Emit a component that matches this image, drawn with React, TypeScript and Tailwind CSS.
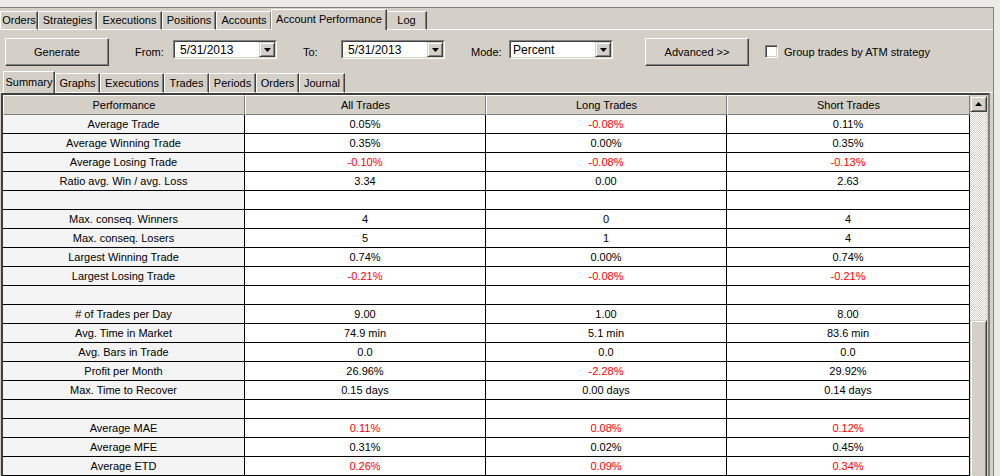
import React from "react";

const mainTabs = [
	{ label: "Orders", w: "w-[38px]" },
	{ label: "Strategies", w: "w-[59px]" },
	{ label: "Executions", w: "w-[65px]" },
	{ label: "Positions", w: "w-[54px]" },
	{ label: "Accounts", w: "w-[56px]" },
	{ label: "Account Performance", w: "w-[116px]", active: true },
	{ label: "Log", w: "w-[41px]" },
];

const subTabs = [
	{ label: "Summary", w: "w-[52px]", active: true },
	{ label: "Graphs", w: "w-[45px]" },
	{ label: "Executions", w: "w-[64px]" },
	{ label: "Trades", w: "w-[45px]" },
	{ label: "Periods", w: "w-[47px]" },
	{ label: "Orders", w: "w-[43px]" },
	{ label: "Journal", w: "w-[46px]" },
];

type Row = { name?: string; vals?: string[]; red?: boolean };

const rows: Row[] = [
	{ name: "Average Trade", vals: ["0.05%", "-0.08%", "0.11%"] },
	{ name: "Average Winning Trade", vals: ["0.35%", "0.00%", "0.35%"] },
	{ name: "Average Losing Trade", vals: ["-0.10%", "-0.08%", "-0.13%"] },
	{ name: "Ratio avg. Win / avg. Loss", vals: ["3.34", "0.00", "2.63"] },
	{},
	{ name: "Max. conseq. Winners", vals: ["4", "0", "4"] },
	{ name: "Max. conseq. Losers", vals: ["5", "1", "4"] },
	{ name: "Largest Winning Trade", vals: ["0.74%", "0.00%", "0.74%"] },
	{ name: "Largest Losing Trade", vals: ["-0.21%", "-0.08%", "-0.21%"] },
	{},
	{ name: "# of Trades per Day", vals: ["9.00", "1.00", "8.00"] },
	{ name: "Avg. Time in Market", vals: ["74.9 min", "5.1 min", "83.6 min"] },
	{ name: "Avg. Bars in Trade", vals: ["0.0", "0.0", "0.0"] },
	{ name: "Profit per Month", vals: ["26.96%", "-2.28%", "29.92%"] },
	{ name: "Max. Time to Recover", vals: ["0.15 days", "0.00 days", "0.14 days"] },
	{},
	{ name: "Average MAE", vals: ["0.11%", "0.08%", "0.12%"], red: true },
	{ name: "Average MFE", vals: ["0.31%", "0.02%", "0.45%"] },
	{ name: "Average ETD", vals: ["0.26%", "0.09%", "0.34%"], red: true },
];

const colW = ["w-[242px]", "w-[241px]", "w-[241px]", "w-[243px]"];

function DownArrow() {
	return (
		<svg width="7" height="4" viewBox="0 0 7 4">
			<path d="M0 0h7L3.5 4z" fill="#000" />
		</svg>
	);
}

function Combo({ value, pad }: { value: string; pad: string }) {
	return (
		<div className="w-[104px] h-[19px] border border-t-[#808080] border-l-[#808080] border-r-white border-b-white">
			<div className="h-full flex items-center bg-white border border-t-[#404040] border-l-[#404040] border-r-[#d4d0c8] border-b-[#d4d0c8]">
				<span className={`flex-1 ${pad} text-[12px] leading-none`}>{value}</span>
				<div className="w-[16px] h-full flex items-center justify-center bg-[#d4d0c8] border border-t-[#d4d0c8] border-l-[#d4d0c8] border-r-[#404040] border-b-[#404040] shadow-[inset_1px_1px_#fff,inset_-1px_-1px_#808080]">
					<DownArrow />
				</div>
			</div>
		</div>
	);
}

function Button({ label }: { label: string }) {
	return (
		<div className="w-[104px] h-[28px] flex items-center justify-center bg-[#d4d0c8] border border-t-white border-l-white border-r-[#404040] border-b-[#404040] shadow-[inset_-1px_-1px_#808080] text-[11px]">
			{label}
		</div>
	);
}

export default function App() {
	return (
		<div className="w-[1000px] h-[476px] overflow-hidden bg-[#ecebe7] text-black font-['Liberation_Sans',Arial,sans-serif] select-none">
			<div className="h-[7px]" />
			<div className="w-[994px] bg-[#d4d0c8] border-t border-r border-[#808080] h-[600px]">
				{/* main tabs */}
				<div className="h-[22px] flex items-end">
					{mainTabs.map((t) =>
						t.active ? (
							<div
								key={t.label}
								className={`${t.w} h-[21px] -mx-[1px] px-[1px] z-10 flex items-start justify-center pt-[4px] whitespace-nowrap bg-[#d4d0c8] border-t border-l border-white border-r border-r-[#404040] shadow-[inset_-1px_0_#808080] text-[11px] leading-none`}
							>
								{t.label}
							</div>
						) : (
							<div
								key={t.label}
								className={`${t.w} h-[19px] flex items-center justify-center pb-[1px] whitespace-nowrap border-t border-l border-b border-white border-r border-r-[#404040] shadow-[inset_-1px_0_#808080] text-[11px] leading-none`}
							>
								{t.label}
							</div>
						)
					)}
					<div className="flex-1 border-b border-white" />
				</div>

				{/* controls */}
				<div className="h-[28px] mt-[8px] flex items-start">
					<div className="ml-[5px]">
						<Button label="Generate" />
					</div>
					<div className="ml-[26px] w-[38px] h-[28px] flex items-center text-[11px]">From:</div>
					<div className="mt-[2px]">
						<Combo value="5/31/2013" pad="pl-[5px]" />
					</div>
					<div className="ml-[26px] w-[38px] h-[28px] flex items-center text-[11px]">To:</div>
					<div className="mt-[2px]">
						<Combo value="5/31/2013" pad="pl-[5px]" />
					</div>
					<div className="ml-[26px] w-[38px] h-[28px] flex items-center text-[11px]">Mode:</div>
					<div className="mt-[2px]">
						<Combo value="Percent" pad="pl-[2px]" />
					</div>
					<div className="ml-[32px]">
						<Button label="Advanced >>" />
					</div>
					<div className="ml-[16px] mt-[7px] w-[13px] h-[13px] bg-white border border-t-[#808080] border-l-[#808080] border-r-white border-b-white shadow-[inset_1px_1px_#404040,inset_-1px_-1px_#d4d0c8]" />
					<div className="ml-[6px] h-[28px] flex items-center text-[11px]">Group trades by ATM strategy</div>
				</div>

				{/* sub tabs */}
				<div className="h-[22px] mt-[5px] flex items-end">
					<div className="w-[3px] h-[1px] bg-white" />
					{subTabs.map((t) =>
						t.active ? (
							<div
								key={t.label}
								className={`${t.w} h-[22px] z-10 flex items-start justify-center pt-[5px] whitespace-nowrap bg-[#d4d0c8] border-t border-l border-white border-r border-r-[#404040] shadow-[inset_-1px_0_#808080] text-[11px] leading-none`}
							>
								{t.label}
							</div>
						) : (
							<div
								key={t.label}
								className={`${t.w} h-[20px] flex items-center justify-center pt-[1px] whitespace-nowrap border-t border-l border-b border-white border-r border-r-[#404040] shadow-[inset_-1px_0_#808080] text-[11px] leading-none`}
							>
								{t.label}
							</div>
						)
					)}
					<div className="flex-1 h-[1px] bg-white" />
				</div>

				{/* grid */}
				<div className="ml-[1px] w-[989px] border-t-2 border-l-2 border-r-2 border-t-[#404040] border-l-[#404040] border-r-[#808080] flex">
					<div>
						<div className="flex">
							{["Performance", "All Trades", "Long Trades", "Short Trades"].map((h, i) => (
								<div
									key={h}
									className={`${colW[i]} h-[20px] flex items-center justify-center bg-[#d4d0c8] border-t border-l border-white border-r border-b border-r-[#808080] border-b-[#808080] text-[11px] leading-none`}
								>
									{h}
								</div>
							))}
						</div>
						{rows.map((r, ri) => (
							<div key={ri} className="flex">
								<div className={`${colW[0]} h-[19px] flex items-center justify-center bg-[#f4f4f4] border-r border-b border-black text-[11px] leading-none`}>
									{r.name}
								</div>
								{[0, 1, 2].map((ci) => {
									const v = r.vals ? r.vals[ci] : "";
									const red = r.red || v.startsWith("-");
									return (
										<div
											key={ci}
											className={`${colW[ci + 1]} h-[19px] flex items-center justify-center bg-white border-r border-b border-black text-[11px] leading-none ${red ? "text-[#ff0000]" : ""}`}
										>
											{v}
										</div>
									);
								})}
							</div>
						))}
					</div>

					{/* scrollbar */}
					<div className="w-[17px] flex flex-col">
						<div className="h-[16px] mt-[1px] flex items-center justify-center bg-[#d4d0c8] border border-t-[#d4d0c8] border-l-[#d4d0c8] border-r-[#404040] border-b-[#404040] shadow-[inset_1px_1px_#fff,inset_-1px_-1px_#808080]">
							<svg width="7" height="4" viewBox="0 0 7 4">
								<path d="M3.5 0L7 4H0z" fill="#000" />
							</svg>
						</div>
						<div className="h-[208px] bg-[repeating-conic-gradient(#d4d0c8_0_25%,#ffffff_0_50%)] bg-[length:2px_2px]" />
						<div className="h-[300px] bg-[#d4d0c8] border border-t-[#d4d0c8] border-l-[#d4d0c8] border-r-[#404040] border-b-[#404040] shadow-[inset_1px_1px_#fff,inset_-1px_-1px_#808080]" />
					</div>
				</div>
			</div>
		</div>
	);
}
